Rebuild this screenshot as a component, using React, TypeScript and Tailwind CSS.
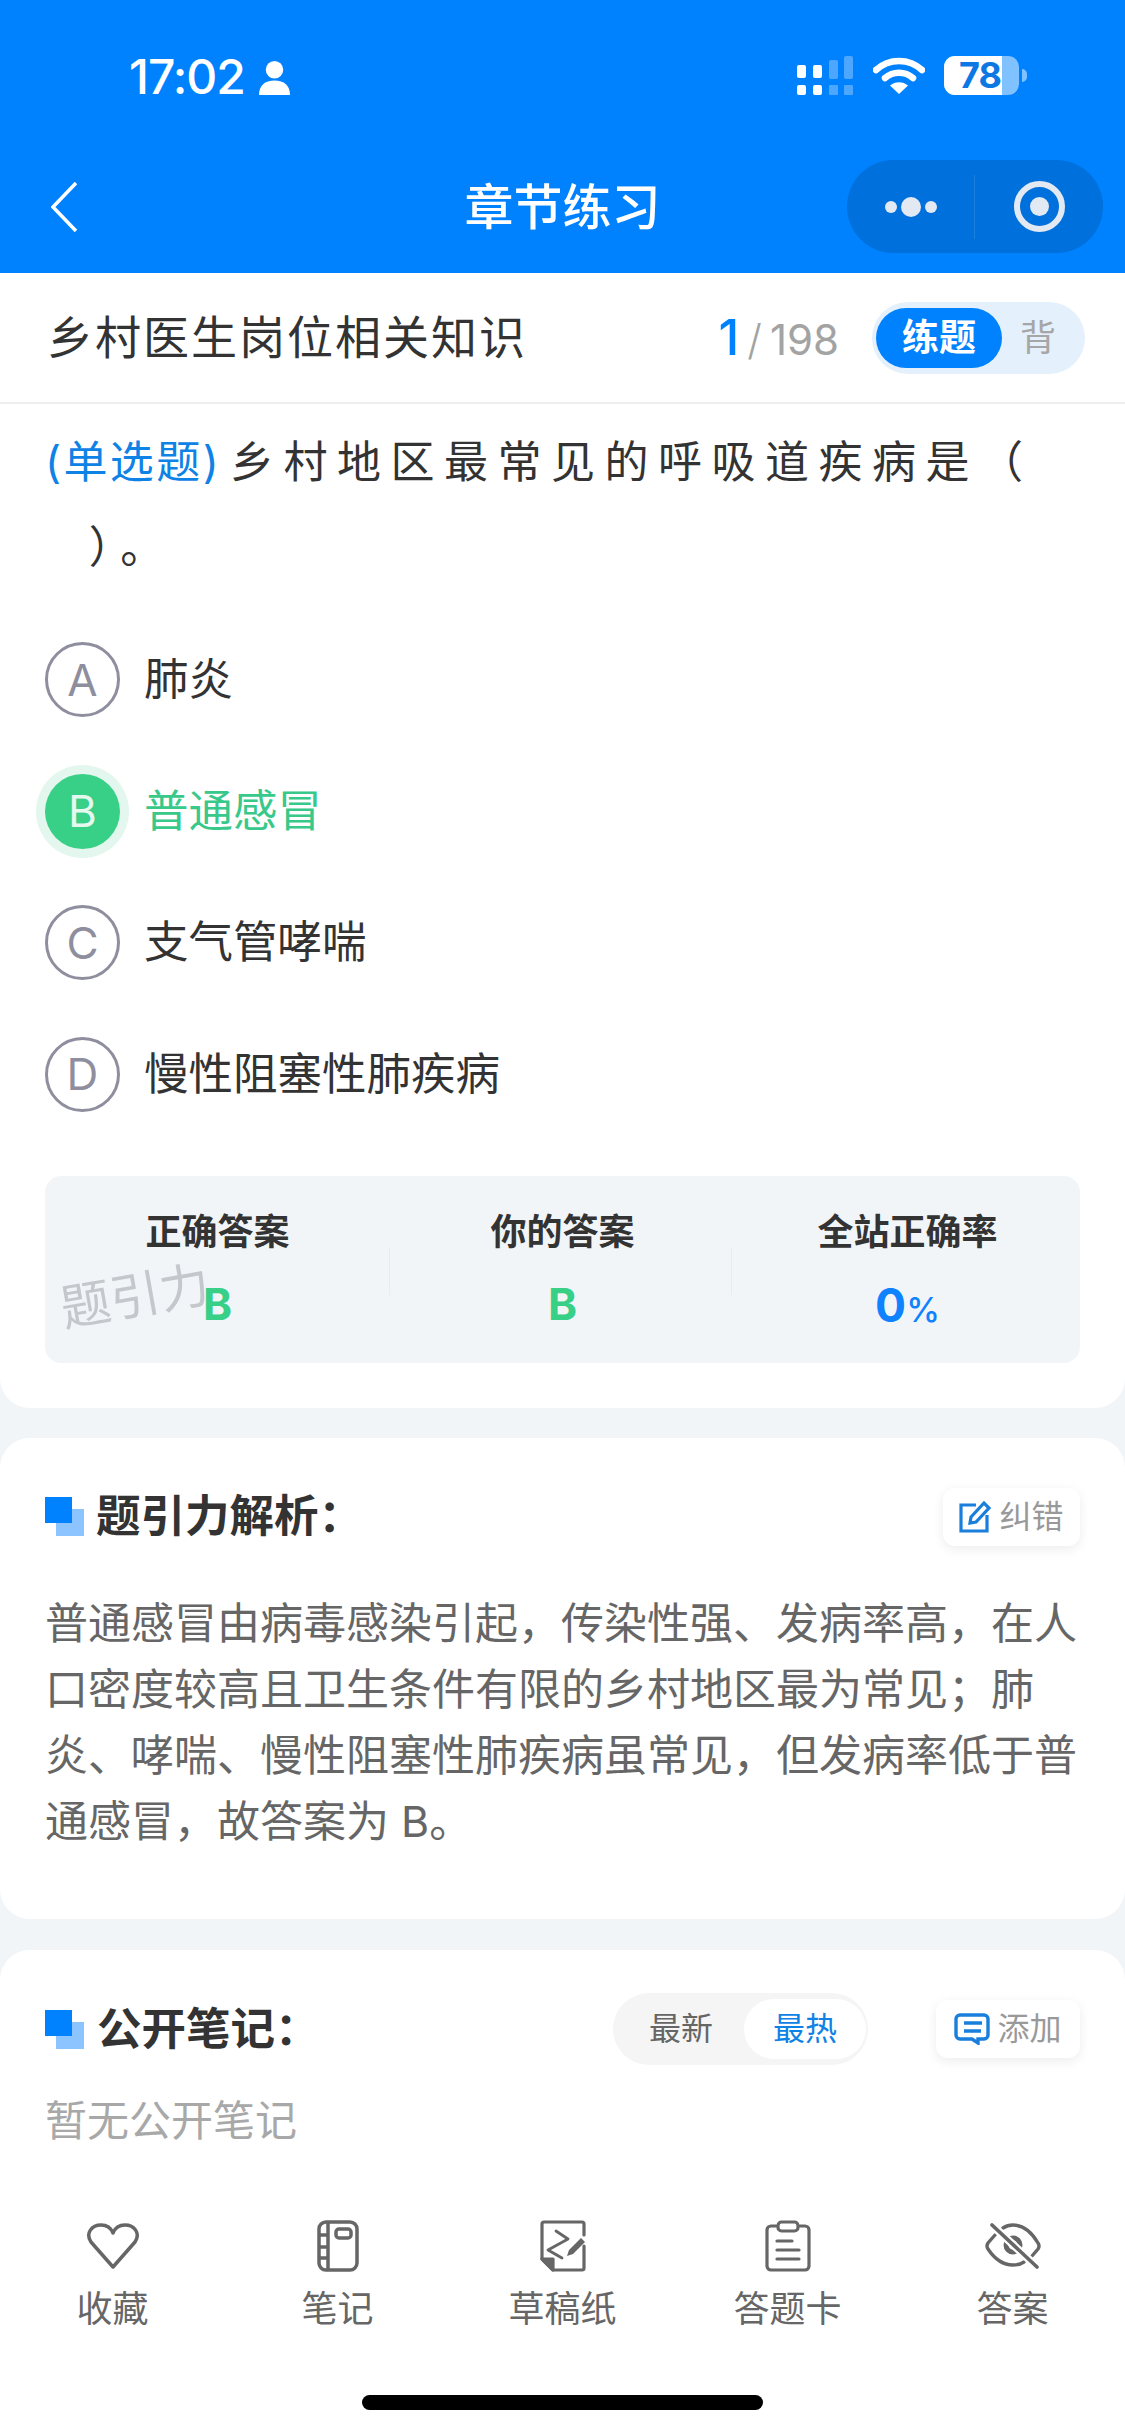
import React from 'react';

const CJK = "font-['Inter','Noto_Sans_CJK_SC',sans-serif]";

const options = [
    { key: 'A', text: '肺炎' },
    { key: 'B', text: '普通感冒', correct: true },
    { key: 'C', text: '支气管哮喘' },
    { key: 'D', text: '慢性阻塞性肺疾病' },
];

const SquareMark = () => (
    <svg width="39" height="39" viewBox="0 0 39 39" className="shrink-0" aria-hidden="true">
        <rect x="11" y="12" width="28" height="27" fill="#8cc4ff" />
        <rect x="0" y="0" width="27" height="26" fill="#0082ff" />
    </svg>
);

const StatusBar = () => (
    <div className="flex h-[160px] shrink-0 items-start pt-[48px] pl-[129px] pr-[98px] text-white">
        <span className="text-[48px] leading-[58px] font-medium tracking-[-1px]">17:02</span>
        <svg width="31" height="34" viewBox="0 0 32 35" className="ml-[14px] mt-[13px]" fill="white" aria-hidden="true">
            <circle cx="16" cy="9" r="9" />
            <path d="M0 35c0-10 6-15 16-15s16 5 16 15z" />
        </svg>
        <div className="ml-auto mt-[8px] flex items-start">
            <svg width="58" height="39" viewBox="0 0 58 39" aria-hidden="true">
                <g fill="white">
                    <rect x="0" y="9" width="9" height="13" rx="2" />
                    <rect x="0" y="29" width="9" height="10" rx="2" />
                    <rect x="16" y="9" width="9" height="13" rx="2" />
                    <rect x="16" y="29" width="9" height="10" rx="2" />
                </g>
                <g fill="white" fillOpacity="0.3">
                    <rect x="32" y="4" width="9" height="19" rx="2" />
                    <rect x="32" y="29" width="9" height="10" rx="1" />
                    <rect x="47" y="0" width="9" height="23" rx="2" />
                    <rect x="47" y="29" width="9" height="10" rx="1" />
                </g>
            </svg>
            <svg width="52" height="37" viewBox="0 0 52 37" className="ml-[18px] mt-[1px]" fill="none" stroke="white" aria-hidden="true">
                <path d="M3 13C16 1 36 1 49 13" strokeWidth="6.5" strokeLinecap="round" />
                <path d="M12 21C20 14 32 14 40 21" strokeWidth="6.5" strokeLinecap="round" />
                <path d="M17 28.5C22 24 30 24 35 28.5L26 37Z" fill="white" stroke="none" />
            </svg>
            <div className="relative ml-[19px] flex h-[39px] w-[75px] items-center rounded-[11px] bg-white/50">
                <div className="h-full w-[58px] rounded-l-[11px] bg-white" />
                <span className="absolute left-[15px] top-0 text-[36px] leading-[39px] font-bold tracking-[-1px] text-[#0b78e3]">78</span>
            </div>
            <div className="mt-[13px] ml-[3px] h-[13px] w-[5px] rounded-r-full bg-white/50" />
        </div>
    </div>
);

const NavBar = () => (
    <div className="relative flex h-[113px] shrink-0 items-start justify-center">
        <svg width="27" height="50" viewBox="0 0 27 50" className="absolute left-[51px] top-[22px]" fill="none" stroke="white" strokeWidth="3.5" aria-hidden="true">
            <path d="M25 1L2 25l23 24" />
        </svg>
        <h1 className="mt-[18px] text-[49px] leading-[60px] font-medium text-white">章节练习</h1>
        <div className="absolute left-[847px] top-0 flex h-[93px] w-[256px] items-center rounded-full bg-[#0070dc]">
            <div className="flex h-[64px] w-[128px] items-center justify-center gap-[4px] border-r border-[#1a7edf]">
                <span className="size-[12px] rounded-full bg-[#e3e9f2]" />
                <span className="size-[20px] rounded-full bg-[#e3e9f2]" />
                <span className="size-[12px] rounded-full bg-[#e3e9f2]" />
            </div>
            <div className="flex flex-1 items-center justify-center">
                <div className="flex size-[51px] items-center justify-center rounded-full border-[6px] border-[#e3e9f2]">
                    <span className="size-[19px] rounded-full bg-[#e3e9f2]" />
                </div>
            </div>
        </div>
    </div>
);

const SubHeader = () => (
    <div className="flex h-[131px] items-center border-b-2 border-[#eeeeee] bg-white pl-[47px] pr-[40px]">
        <h2 className="text-[46px] tracking-[2px] text-[#333333]">乡村医生岗位相关知识</h2>
        <div className="ml-auto flex items-baseline text-[42px] text-[#a3a3a3]">
            <span className="text-[50px] font-medium text-[#0082ff]">1</span>
            <span className="mx-[8px] font-light">/</span>
            <span>198</span>
        </div>
        <div className="ml-[33px] flex h-[72px] w-[213px] items-center rounded-full bg-[#e4f0fc] pl-[4px]">
            <div className="flex h-[60px] w-[126px] items-center justify-center rounded-full bg-[#0082ff] text-[37px] font-bold text-white">练题</div>
            <span className="ml-[18px] text-[36px] text-[#a6a6a6]">背</span>
        </div>
    </div>
);

const Option = ({ label, text, correct }: { label: string; text: string; correct?: boolean }) => (
    <div className="flex h-[131.5px] items-center px-[45px]">
        {correct ? (
            <div className="flex size-[75px] items-center justify-center rounded-full bg-[#38cf87] text-[44px] text-[#e4f8ee] shadow-[0_0_0_9px_#e3f7ee]">{label}</div>
        ) : (
            <div className="flex size-[75px] items-center justify-center rounded-full border-[3px] border-[#8e8e9e] text-[44px] text-[#8e8e9e]">{label}</div>
        )}
        <span className={`ml-[24px] text-[44.5px] ${correct ? 'text-[#38c98a]' : 'text-[#333333]'}`}>{text}</span>
    </div>
);

const ResultCol = ({ title, children }: { title: string; children: React.ReactNode }) => (
    <div className="flex flex-col items-center">
        <span className="text-[36px] leading-[50px] font-bold text-[#333333]">{title}</span>
        <div className="mt-[14px] flex h-[50px] items-baseline">{children}</div>
    </div>
);

const ActionChip = ({ icon, label }: { icon: React.ReactNode; label: string }) => (
    <div className="flex h-[58px] w-full items-center justify-center gap-[7px] rounded-[12px] bg-white shadow-[0_3px_12px_rgba(0,0,0,0.08)]">
        {icon}
        <span className="text-[32px] text-[#999999]">{label}</span>
    </div>
);

const HeartIcon = () => (
    <svg width="54" height="46" viewBox="0 0 54 46" fill="none" stroke="#666666" strokeWidth="3.5" strokeLinejoin="round" aria-hidden="true">
        <path d="M27 44L5 19C-1 10 6 2 15 2c6 0 10 3 12 8 2-5 6-8 12-8 9 0 16 8 10 17z" />
    </svg>
);

const NotebookIcon = () => (
    <svg width="42" height="52" viewBox="0 0 42 52" fill="none" stroke="#666666" strokeWidth="3.5" aria-hidden="true">
        <rect x="2" y="2" width="38" height="48" rx="7" />
        <path d="M11 2v48M2 15h9M2 27h9M2 38h9" />
        <rect x="19" y="9" width="15" height="9" rx="3" />
    </svg>
);

const DraftIcon = () => (
    <svg width="46" height="52" viewBox="0 0 46 52" fill="none" stroke="#666666" strokeWidth="3.2" strokeLinejoin="round" strokeLinecap="round" aria-hidden="true">
        <path d="M44 15V4a2 2 0 0 0-2-2H4a2 2 0 0 0-2 2v35l11 11h29a2 2 0 0 0 2-2V26" />
        <path d="M2 39h11v11z" fill="#666666" />
        <path d="M16 11l12 8-20 11 14 8" strokeWidth="2.8" />
        <path d="M27 36l2-6 12-12 4 4-12 12z" fill="#666666" stroke="none" />
    </svg>
);

const CardIcon = () => (
    <svg width="46" height="52" viewBox="0 0 46 52" fill="none" stroke="#666666" strokeWidth="3.2" strokeLinecap="round" aria-hidden="true">
        <path d="M11 6H6a4 4 0 0 0-4 4v36a4 4 0 0 0 4 4h34a4 4 0 0 0 4-4V10a4 4 0 0 0-4-4h-5" />
        <rect x="13" y="2" width="20" height="9" rx="3.5" />
        <path d="M12 21h15M12 30h22M12 39h22" />
    </svg>
);

const EyeOffIcon = () => (
    <svg width="56" height="46" viewBox="0 0 56 46" fill="none" stroke="#666666" strokeWidth="3.4" strokeLinecap="round" aria-hidden="true">
        <path d="M10 12L3 20q-2 3 0 6c8 12 17 16 25 16 4 0 8-1 11-3" />
        <path d="M18 5c3-2 7-3 10-3 10 0 18 6 25 18q2 3 0 6l-6 7" />
        <circle cx="28" cy="22" r="7" strokeWidth="5" />
        <path d="M7 2l45 42" stroke="white" strokeWidth="8" strokeLinecap="butt" />
        <path d="M7 2l45 42" strokeWidth="3.6" />
    </svg>
);

const bottomItems = [
    { label: '收藏', icon: <HeartIcon /> },
    { label: '笔记', icon: <NotebookIcon /> },
    { label: '草稿纸', icon: <DraftIcon /> },
    { label: '答题卡', icon: <CardIcon /> },
    { label: '答案', icon: <EyeOffIcon /> },
];

export default function App() {
    return (
        <div className={`flex h-[2436px] w-[1125px] flex-col overflow-hidden bg-[#f2f5f8] ${CJK}`}>
            <header className="flex h-[273px] shrink-0 flex-col bg-[#0082ff]">
                <StatusBar />
                <NavBar />
            </header>

            <SubHeader />

            <section className="rounded-b-[30px] bg-white pb-[45px]">
                <p className="px-[45px] pt-[16px] text-[44px] leading-[85px] tracking-[9.5px] text-[#333333]">
                    <span className="mr-[9px] tracking-[2.4px] text-[#0f82e6]">(单选题)</span>乡村地区最常见的呼吸道疾病是（ {'\u00a0\u00a0'}）。
                </p>
                <div className="mt-[24px]">
                    {options.map((o) => (
                        <Option key={o.key} label={o.key} text={o.text} correct={o.correct} />
                    ))}
                </div>
                <div className="relative mx-[45px] mt-[36px] grid h-[187px] grid-cols-3 rounded-[16px] bg-[#f2f5f8] pt-[31px]">
                    <ResultCol title="正确答案">
                        <span className="text-[44px] font-bold text-[#38cf87]">B</span>
                    </ResultCol>
                    <ResultCol title="你的答案">
                        <span className="text-[44px] font-bold text-[#38cf87]">B</span>
                    </ResultCol>
                    <ResultCol title="全站正确率">
                        <span className="text-[46px] font-bold text-[#0f82ff]">0</span>
                        <span className="text-[34px] font-medium text-[#0f82ff]">%</span>
                    </ResultCol>
                    <span className="absolute left-[15px] top-[90px] -rotate-[10deg] text-[50px] leading-[60px] text-[#c4c7cb]">题引力</span>
                    <span className="absolute left-[344px] top-[72px] h-[47px] w-px bg-[#e8ebef]" />
                    <span className="absolute left-[686px] top-[72px] h-[47px] w-px bg-[#e8ebef]" />
                </div>
            </section>

            <section className="mt-[30px] h-[481px] shrink-0 rounded-[30px] bg-white px-[45px] pt-[50px]">
                <div className="flex h-[57px] items-center">
                    <SquareMark />
                    <h3 className="ml-[12px] text-[44.5px] font-bold text-[#333333]">题引力解析：</h3>
                    <div className="ml-auto w-[137px]">
                        <ActionChip
                            label="纠错"
                            icon={
                                <svg width="33" height="33" viewBox="0 0 33 33" fill="none" stroke="#1a7fdc" strokeWidth="3.2" aria-hidden="true">
                                    <path d="M17 5H2v26h26V15" />
                                    <path d="M12 17L25 3l5 5-13 14-6 1z" />
                                </svg>
                            }
                        />
                    </div>
                </div>
                <p className="mt-[45px] text-[43px] leading-[66px] text-[#666666]">
                    普通感冒由病毒感染引起，传染性强、发病率高，在人口密度较高且卫生条件有限的乡村地区最为常见；肺炎、哮喘、慢性阻塞性肺疾病虽常见，但发病率低于普通感冒，故答案为 B。
                </p>
            </section>

            <section className="mt-[31px] flex-1 rounded-t-[30px] bg-white px-[45px] pt-[43px]">
                <div className="flex h-[72px] items-center">
                    <SquareMark />
                    <h3 className="ml-[13px] text-[44.5px] font-bold text-[#333333]">公开笔记：</h3>
                    <div className="ml-auto flex h-[72px] w-[255px] items-center rounded-full bg-[#f5f5f5] pl-[36px] pr-[2px]">
                        <span className="text-[32px] text-[#666666]">最新</span>
                        <span className="ml-auto flex h-[60px] w-[122px] items-center justify-center rounded-full bg-white text-[32px] text-[#0f82e6]">最热</span>
                    </div>
                    <div className="ml-[68px] w-[144px]">
                        <ActionChip
                            label="添加"
                            icon={
                                <svg width="36" height="32" viewBox="0 0 36 32" fill="none" stroke="#1a7fdc" strokeWidth="3.4" aria-hidden="true">
                                    <path d="M6 2h24a4 4 0 0 1 4 4v16a4 4 0 0 1-4 4h-6v4l-6-4H6a4 4 0 0 1-4-4V6a4 4 0 0 1 4-4z" />
                                    <path d="M10 10h18M10 18h17" />
                                </svg>
                            }
                        />
                    </div>
                </div>
                <p className="mt-[26px] text-[42px] leading-[60px] text-[#a8a8a8]">暂无公开笔记</p>

                <nav className="-mx-[45px] mt-[68px] grid grid-cols-5">
                    {bottomItems.map((item) => (
                        <div key={item.label} className="flex flex-col items-center">
                            <div className="flex h-[53px] items-center justify-center">{item.icon}</div>
                            <span className="mt-[12px] text-[36px] leading-[50px] text-[#666666]">{item.label}</span>
                        </div>
                    ))}
                </nav>
                <div className="mx-auto mt-[61px] h-[15px] w-[401px] rounded-full bg-black" />
            </section>
        </div>
    );
}
